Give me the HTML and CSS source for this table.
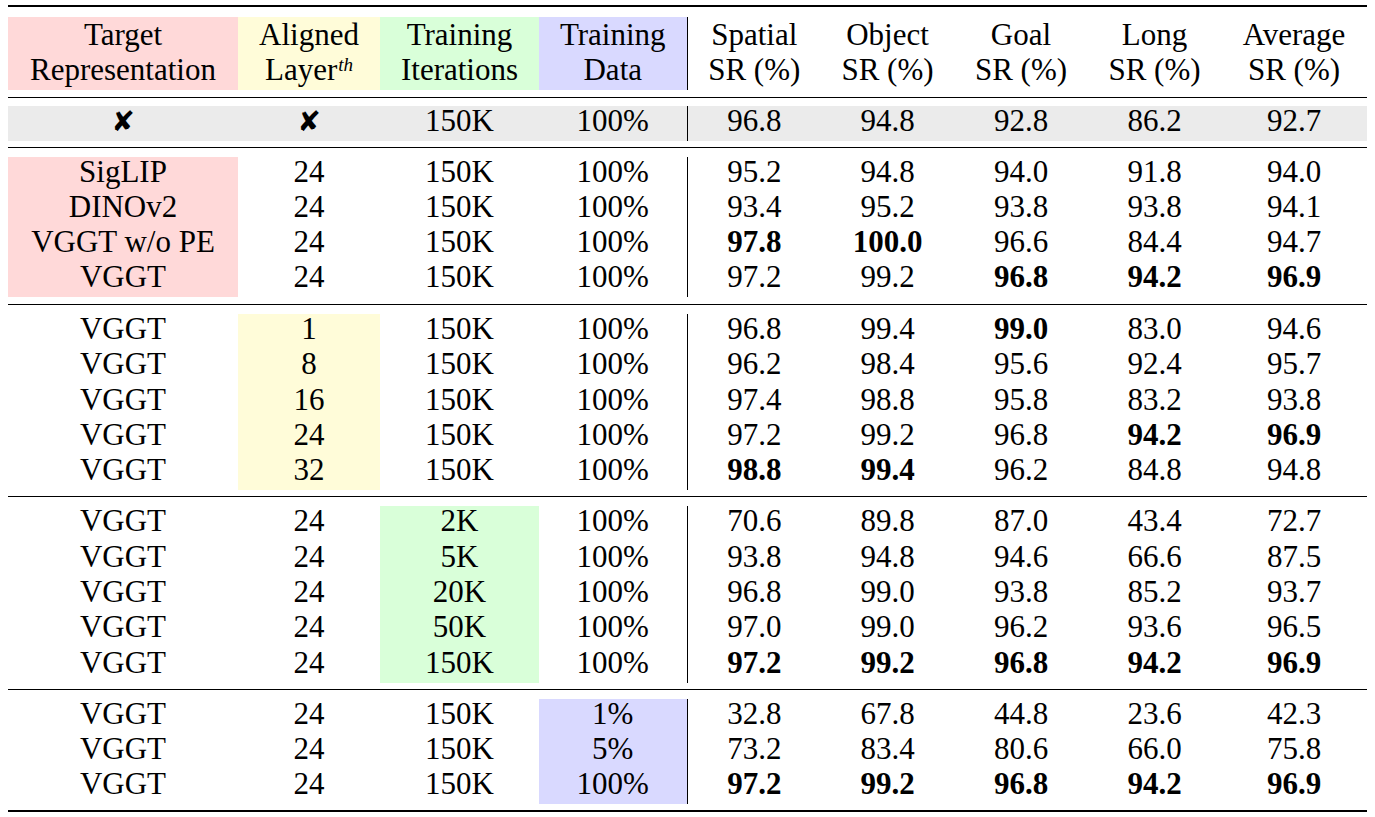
FILE: index.html
```html
<!DOCTYPE html>
<html lang="en">
<head>
<meta charset="utf-8">
<title>Ablation results</title>
<link rel="stylesheet" href="styles.css">
</head>
<body>
<table class="results">
  <colgroup>
    <col class="c-target">
    <col class="c-layer">
    <col class="c-iter">
    <col class="c-data">
    <col class="c-metric">
    <col class="c-metric-b">
    <col class="c-metric">
    <col class="c-metric-b">
    <col class="c-avg">
  </colgroup>
  <thead>
    <tr class="gap gap-top"><td colspan="9"></td></tr>
    <tr class="head">
      <th class="pink">Target<br>Representation</th>
      <th class="yellow">Aligned<br>Layer<sup class="th">th</sup></th>
      <th class="green">Training<br>Iterations</th>
      <th class="blue sep">Training<br>Data</th>
      <th>Spatial<br>SR (%)</th>
      <th>Object<br>SR (%)</th>
      <th>Goal<br>SR (%)</th>
      <th>Long<br>SR (%)</th>
      <th>Average<br>SR (%)</th>
    </tr>
    <tr class="gap gap-bottom"><td colspan="9"></td></tr>
  </thead>

  <tbody class="section">
    <tr class="gap gap-a8"><td colspan="9"></td></tr>
    <tr class="row base">
      <td><span class="xmark">&#x2718;</span></td><td><span class="xmark">&#x2718;</span></td><td>150K</td><td class="sep">100%</td>
      <td>96.8</td><td>94.8</td><td>92.8</td><td>86.2</td><td>92.7</td>
    </tr>
    <tr class="gap gap-b"><td colspan="9"></td></tr>
  </tbody>

  <tbody class="section">
    <tr class="gap gap-a"><td colspan="9"></td></tr>
    <tr class="row"><td class="pink">SigLIP</td><td>24</td><td>150K</td><td class="sep">100%</td><td>95.2</td><td>94.8</td><td>94.0</td><td>91.8</td><td>94.0</td></tr>
    <tr class="row"><td class="pink">DINOv2</td><td>24</td><td>150K</td><td class="sep">100%</td><td>93.4</td><td>95.2</td><td>93.8</td><td>93.8</td><td>94.1</td></tr>
    <tr class="row"><td class="pink">VGGT w/o PE</td><td>24</td><td>150K</td><td class="sep">100%</td><td><b>97.8</b></td><td><b>100.0</b></td><td>96.6</td><td>84.4</td><td>94.7</td></tr>
    <tr class="row"><td class="pink">VGGT</td><td>24</td><td>150K</td><td class="sep">100%</td><td>97.2</td><td>99.2</td><td><b>96.8</b></td><td><b>94.2</b></td><td><b>96.9</b></td></tr>
    <tr class="gap gap-b7"><td colspan="9"></td></tr>
  </tbody>

  <tbody class="section">
    <tr class="gap gap-a"><td colspan="9"></td></tr>
    <tr class="row r5"><td>VGGT</td><td class="yellow">1</td><td>150K</td><td class="sep">100%</td><td>96.8</td><td>99.4</td><td><b>99.0</b></td><td>83.0</td><td>94.6</td></tr>
    <tr class="row r5"><td>VGGT</td><td class="yellow">8</td><td>150K</td><td class="sep">100%</td><td>96.2</td><td>98.4</td><td>95.6</td><td>92.4</td><td>95.7</td></tr>
    <tr class="row r5"><td>VGGT</td><td class="yellow">16</td><td>150K</td><td class="sep">100%</td><td>97.4</td><td>98.8</td><td>95.8</td><td>83.2</td><td>93.8</td></tr>
    <tr class="row r5"><td>VGGT</td><td class="yellow">24</td><td>150K</td><td class="sep">100%</td><td>97.2</td><td>99.2</td><td>96.8</td><td><b>94.2</b></td><td><b>96.9</b></td></tr>
    <tr class="row r5"><td>VGGT</td><td class="yellow">32</td><td>150K</td><td class="sep">100%</td><td><b>98.8</b></td><td><b>99.4</b></td><td>96.2</td><td>84.8</td><td>94.8</td></tr>
    <tr class="gap gap-b"><td colspan="9"></td></tr>
  </tbody>

  <tbody class="section">
    <tr class="gap gap-a"><td colspan="9"></td></tr>
    <tr class="row r5"><td>VGGT</td><td>24</td><td class="green">2K</td><td class="sep">100%</td><td>70.6</td><td>89.8</td><td>87.0</td><td>43.4</td><td>72.7</td></tr>
    <tr class="row r5"><td>VGGT</td><td>24</td><td class="green">5K</td><td class="sep">100%</td><td>93.8</td><td>94.8</td><td>94.6</td><td>66.6</td><td>87.5</td></tr>
    <tr class="row r5"><td>VGGT</td><td>24</td><td class="green">20K</td><td class="sep">100%</td><td>96.8</td><td>99.0</td><td>93.8</td><td>85.2</td><td>93.7</td></tr>
    <tr class="row r5"><td>VGGT</td><td>24</td><td class="green">50K</td><td class="sep">100%</td><td>97.0</td><td>99.0</td><td>96.2</td><td>93.6</td><td>96.5</td></tr>
    <tr class="row r5"><td>VGGT</td><td>24</td><td class="green">150K</td><td class="sep">100%</td><td><b>97.2</b></td><td><b>99.2</b></td><td><b>96.8</b></td><td><b>94.2</b></td><td><b>96.9</b></td></tr>
    <tr class="gap gap-b"><td colspan="9"></td></tr>
  </tbody>

  <tbody class="section">
    <tr class="gap gap-a"><td colspan="9"></td></tr>
    <tr class="row"><td>VGGT</td><td>24</td><td>150K</td><td class="blue sep">1%</td><td>32.8</td><td>67.8</td><td>44.8</td><td>23.6</td><td>42.3</td></tr>
    <tr class="row"><td>VGGT</td><td>24</td><td>150K</td><td class="blue sep">5%</td><td>73.2</td><td>83.4</td><td>80.6</td><td>66.0</td><td>75.8</td></tr>
    <tr class="row"><td>VGGT</td><td>24</td><td>150K</td><td class="blue sep">100%</td><td><b>97.2</b></td><td><b>99.2</b></td><td><b>96.8</b></td><td><b>94.2</b></td><td><b>96.9</b></td></tr>
    <tr class="gap gap-b"><td colspan="9"></td></tr>
  </tbody>
</table>
</body>
</html>
```

FILE: styles.css
```css
html, body {
  background: #ffffff;
}

body {
  margin: 5px 8px;
  color: #000000;
  font-family: "Liberation Serif", "Times New Roman", Times, serif;
  font-size: 31px;
}

.results {
  width: 1359px;
  table-layout: fixed;
  border-collapse: collapse;
  border-top: 2px solid #000;
  border-bottom: 2px solid #000;
}

.c-target { width: 230px; }
.c-layer { width: 142px; }
.c-iter { width: 159px; }
.c-data { width: 148px; }
.c-metric { width: 134px; }
.c-metric-b { width: 133px; }
.c-avg { width: 146px; }

.results th,
.results td {
  padding: 0;
  text-align: center;
  vertical-align: top;
  white-space: nowrap;
}

.results th {
  font-weight: normal;
  line-height: 35px;
  height: 73px;
}

.results td {
  line-height: 30px;
  height: 35px;
}

.results b {
  font-weight: bold;
}

.th {
  font-style: italic;
  font-size: 19px;
  line-height: 0;
  vertical-align: 9px;
  margin-left: 1px;
}

.section {
  border-top: 1px solid #000;
}

.gap td { line-height: 0; font-size: 0; }
.gap-top td { height: 10px; }
.gap-bottom td { height: 7px; }
.gap-a8 td { height: 8px; }
.gap-a td { height: 9px; }
.gap-b td { height: 6px; }
.gap-b7 td { height: 7px; }

.row.r5 td { height: 35.3px; }

.sep {
  border-right: 1px solid #000;
}

.pink { background: #ffd9d9; }
.yellow { background: #fffcd9; }
.green { background: #d9ffd9; }
.blue { background: #d9d9ff; }
.base td { background: #ebebeb; }

.xmark {
  font-family: "DejaVu Sans", sans-serif;
  font-size: 28px;
  font-weight: bold;
  line-height: 0;
}
```
